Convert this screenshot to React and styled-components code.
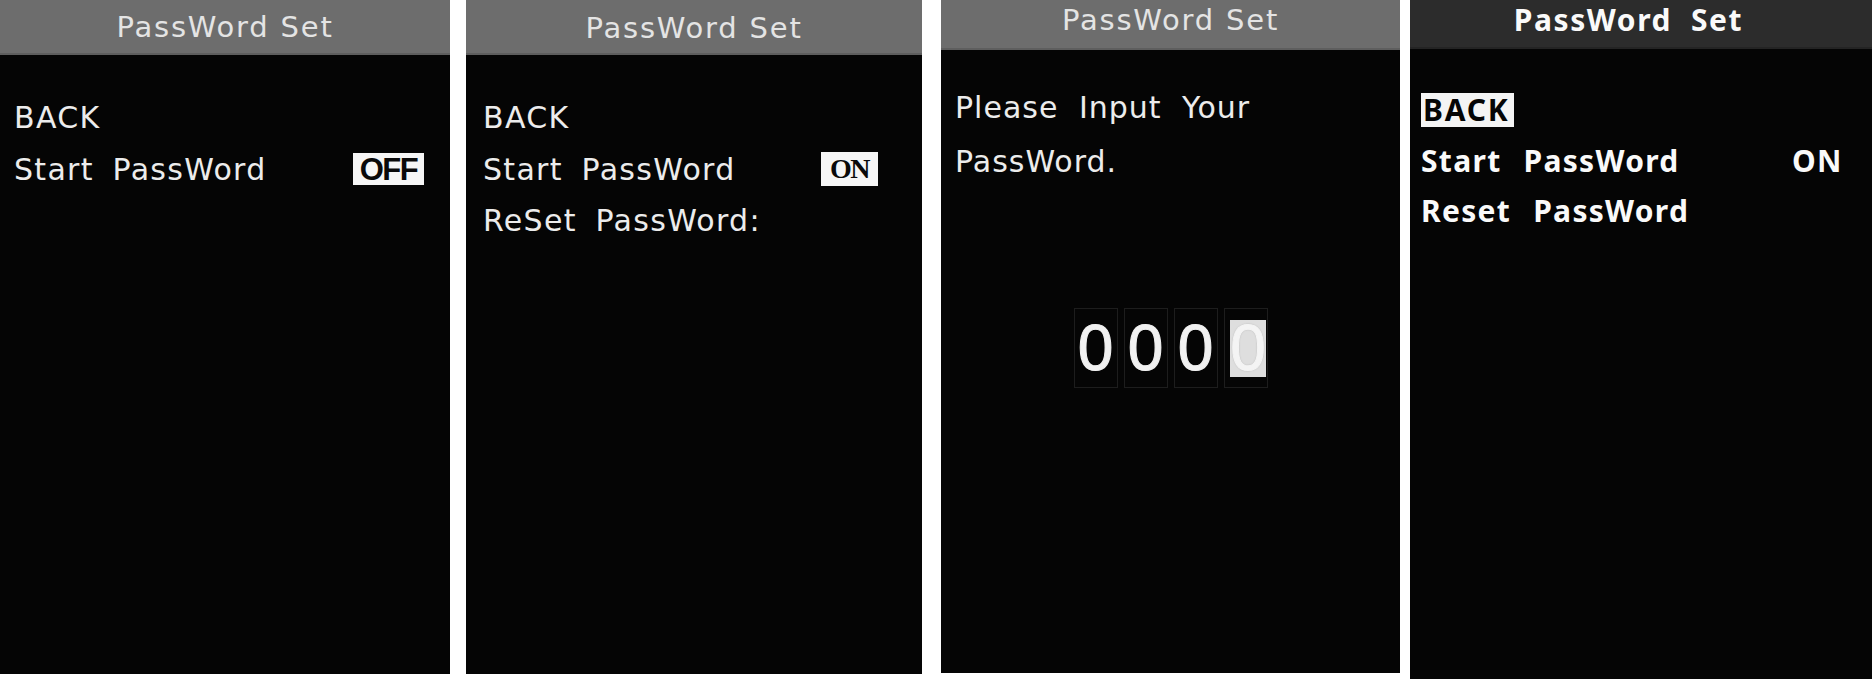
import React from 'react';
import styled, { createGlobalStyle } from 'styled-components';

const GlobalStyle = createGlobalStyle`
  html, body {
    margin: 0;
    padding: 0;
    background: #fff;
  }
  body {
    width: 1872px;
    height: 679px;
    overflow: hidden;
  }
`;

const Strip = styled.div`
  display: flex;
  align-items: flex-start;
  width: 1872px;
`;

const Screen = styled.section`
  flex-shrink: 0;
  width: ${p => p.$w}px;
  height: ${p => p.$h}px;
  margin-left: ${p => p.$gap || 0}px;
  background: #050505;
  display: flex;
  flex-direction: column;
  box-sizing: border-box;
`;

const TitleBar = styled.header`
  flex-shrink: 0;
  box-sizing: border-box;
  height: ${p => p.$h}px;
  padding-top: ${p => p.$top}px;
  padding-right: ${p => p.$shift || 0}px;
  display: flex;
  justify-content: center;
  align-items: flex-start;
  white-space: pre;
  background: ${p => (p.$bold ? '#2c2c2c' : '#6d6d6d')};
  border-bottom: 2px solid ${p => (p.$bold ? '#242424' : '#5e5e5e')};
  color: ${p => (p.$bold ? '#fafafa' : '#e4e4e4')};
  font-family: ${p => (p.$bold ? '"Noto Sans", sans-serif' : '"DejaVu Sans", sans-serif')};
  font-weight: ${p => (p.$bold ? 700 : 400)};
  font-size: ${p => (p.$bold ? 30 : 29)}px;
  letter-spacing: ${p => (p.$bold ? 1.6 : 1.8)}px;
  line-height: 1.2;
`;

const Menu = styled.div`
  display: flex;
  flex-direction: column;
  padding: ${p => p.$top}px 0 0 ${p => p.$left}px;
  color: ${p => (p.$bold ? '#fafafa' : '#ececec')};
  font-family: ${p => (p.$bold ? '"Noto Sans", sans-serif' : '"DejaVu Sans", sans-serif')};
  font-weight: ${p => (p.$bold ? 700 : 400)};
  font-size: 30px;
  letter-spacing: 1.3px;
  word-spacing: ${p => (p.$bold ? 13 : 8)}px;
`;

const Row = styled.div`
  display: grid;
  grid-template-columns: ${p => p.$col}px auto;
  align-items: center;
  height: ${p => p.$h}px;
  white-space: nowrap;
`;

const Picked = styled.span`
  justify-self: start;
  background: #f4f4f4;
  color: #050505;
  padding: 0 4px 0 2px;
  line-height: 34px;
  letter-spacing: 1.8px;
`;

const Badge = styled.span`
  justify-self: start;
  display: inline-flex;
  align-items: center;
  justify-content: center;
  box-sizing: border-box;
  width: ${p => p.$w}px;
  height: ${p => p.$h}px;
  background: #f6f6f6;
  color: #0a0a0a;
  font-family: ${p => (p.$serif ? '"Liberation Serif", serif' : '"Liberation Sans", sans-serif')};
  font-weight: 700;
  font-size: ${p => (p.$serif ? 28 : 31)}px;
  letter-spacing: -1.5px;
  word-spacing: 0;
  line-height: 1;
`;

const Prompt = styled.p`
  margin: 0;
  padding: 31px 0 0 14px;
  color: #ececec;
  font-family: "DejaVu Sans", sans-serif;
  font-size: 30px;
  letter-spacing: 1px;
  word-spacing: 10px;
  line-height: 54px;
`;

const Digits = styled.div`
  display: flex;
  justify-content: center;
  gap: 6px;
  margin-top: 119px;
`;

const Cell = styled.div`
  width: 44px;
  height: 80px;
  box-sizing: border-box;
  border: 1px solid #1d1d1d;
  display: flex;
  align-items: center;
  justify-content: center;
`;

const Digit = styled.span`
  display: flex;
  align-items: center;
  justify-content: center;
  width: 36px;
  height: 57px;
  margin-left: ${p => (p.$active ? 5 : 0)}px;
  background: ${p => (p.$active ? '#dedede' : 'transparent')};
  color: ${p => (p.$active ? '#f4f4f4' : '#f2f2f2')};
  font-family: "Liberation Sans", sans-serif;
  font-size: 64px;
  line-height: 1;
  -webkit-text-stroke: 1px currentColor;
  ${p => p.$active && 'text-shadow: 0 0 2px #a8a8a8, 0 0 1px #b0b0b0;'}
`;

const Toggle = styled.span`
  justify-self: start;
`;

export default function App() {
  return (
    <>
      <GlobalStyle />
      <Strip>
        <Screen $w={450} $h={674}>
          <TitleBar $h={55} $top={10}>PassWord Set</TitleBar>
          <Menu $top={36} $left={14}>
            <Row $h={52} $col={339}>BACK</Row>
            <Row $h={52} $col={339}>
              <span>Start PassWord</span>
              <Badge $w={71} $h={32}>OFF</Badge>
            </Row>
          </Menu>
        </Screen>

        <Screen $w={456} $h={674} $gap={16}>
          <TitleBar $h={55} $top={11}>PassWord Set</TitleBar>
          <Menu $top={36} $left={17}>
            <Row $h={52} $col={338}>BACK</Row>
            <Row $h={52} $col={338}>
              <span>Start PassWord</span>
              <Badge $w={57} $h={34} $serif>ON</Badge>
            </Row>
            <Row $h={51} $col={338}>ReSet PassWord:</Row>
          </Menu>
        </Screen>

        <Screen $w={459} $h={673} $gap={19}>
          <TitleBar $h={50} $top={3}>PassWord Set</TitleBar>
          <Prompt>
            Please Input Your
            <br />
            PassWord.
          </Prompt>
          <Digits>
            {['0', '0', '0', '0'].map((d, i) => (
              <Cell key={i}>
                <Digit $active={i === 3}>{d}</Digit>
              </Cell>
            ))}
          </Digits>
        </Screen>

        <Screen $w={462} $h={679} $gap={10}>
          <TitleBar $h={49} $top={2} $shift={25} $bold>
            {'PassWord  Set'}
          </TitleBar>
          <Menu $top={36} $left={11} $bold>
            <Row $h={50} $col={371}>
              <Picked>BACK</Picked>
            </Row>
            <Row $h={50} $col={371}>
              <span>Start PassWord</span>
              <Toggle>ON</Toggle>
            </Row>
            <Row $h={50} $col={371}>
              <span>Reset PassWord</span>
            </Row>
          </Menu>
        </Screen>
      </Strip>
    </>
  );
}
